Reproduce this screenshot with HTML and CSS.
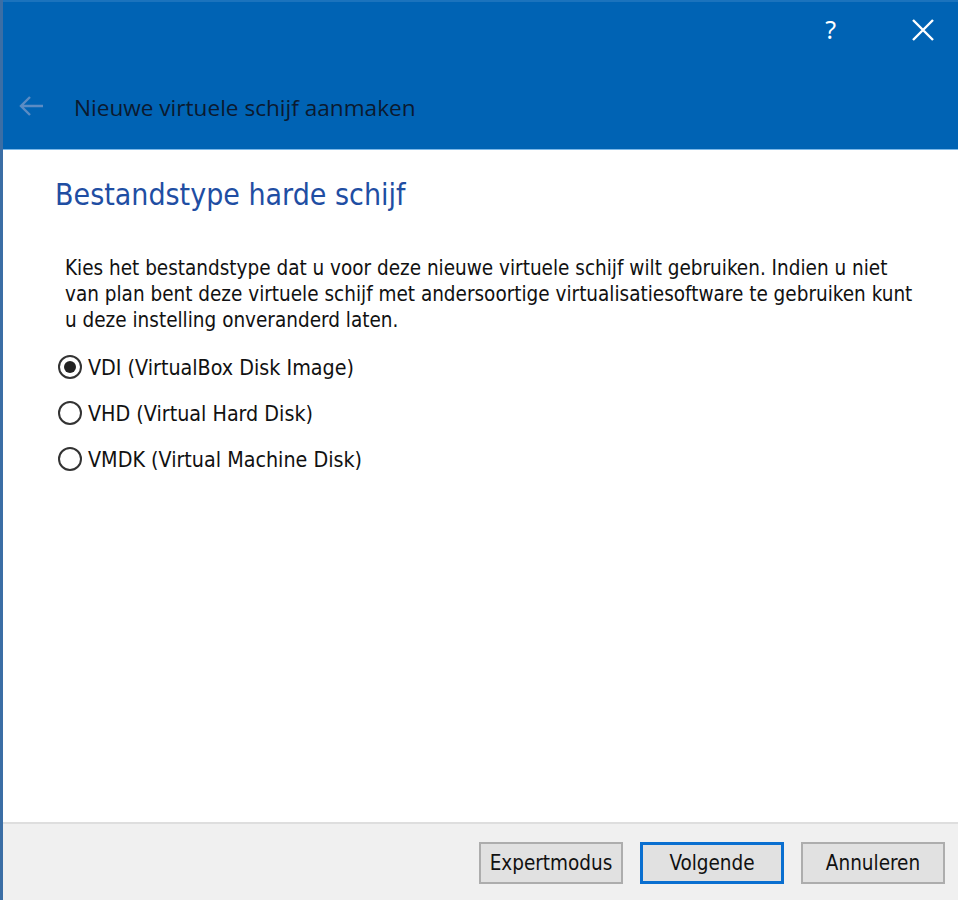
FILE: index.html
```html
<!DOCTYPE html>
<html lang="nl">
<head>
    <meta charset="UTF-8">
    <title>Nieuwe virtuele schijf aanmaken</title>
    <link rel="stylesheet" href="styles.css">
</head>
<body>
    <div class="window">
        <!-- Header -->
        <div class="header">
            <div class="caption-bar">
                <span class="help">?</span>
                <svg class="close" width="26" height="26" viewBox="0 0 26 26">
                    <path d="M3 3 L23 23 M23 3 L3 23" stroke="#fff" stroke-width="2.4" fill="none"/>
                </svg>
            </div>
            <div class="title-row">
                <svg class="back" width="28" height="22" viewBox="0 0 28 22">
                    <path d="M26 11 H4 M13 2 L4 11 L13 20" stroke="#5b8cc4" stroke-width="2.4" fill="none"/>
                </svg>
                <span class="title">Nieuwe virtuele schijf aanmaken</span>
            </div>
        </div>

        <!-- Page -->
        <div class="content">
            <h1 class="page-title">Bestandstype harde schijf</h1>
            <p class="description">
                Kies het bestandstype dat u voor deze nieuwe virtuele schijf wilt gebruiken. Indien u niet<br>
                van plan bent deze virtuele schijf met andersoortige virtualisatiesoftware te gebruiken kunt<br>
                u deze instelling onveranderd laten.
            </p>
            <div class="options">
                <label class="option"><span class="radio checked"></span>VDI (VirtualBox Disk Image)</label>
                <label class="option"><span class="radio"></span>VHD (Virtual Hard Disk)</label>
                <label class="option"><span class="radio"></span>VMDK (Virtual Machine Disk)</label>
            </div>
        </div>

        <!-- Buttons -->
        <div class="footer">
            <button class="btn">Expertmodus</button>
            <button class="btn default">Volgende</button>
            <button class="btn">Annuleren</button>
        </div>
    </div>
</body>
</html>
```

FILE: styles.css
```css
body {
    margin: 0;
    padding: 0;
    background-color: #fff;
    overflow: hidden;
}
.window {
    display: flex;
    flex-direction: column;
    height: 900px;
    width: 955px;
    border-left: 3px solid #3b6ea5;
}
.header {
    background-color: #0063b4;
    border-top: 2px solid #1b73bd;
    border-bottom: 1px solid #7cb8e8;
    box-sizing: border-box;
    height: 150px;
}
.caption-bar {
    display: flex;
    justify-content: flex-end;
    align-items: center;
    height: 58px;
    gap: 74px;
    padding-right: 22px;
}
.help {
    color: #fff;
    font-family: "Noto Sans", sans-serif;
    font-size: 25px;
    margin-top: -4px;
}
.close {
    margin-top: -2px;
}
.title-row {
    display: flex;
    align-items: center;
    height: 50px;
    margin-top: 21px;
    padding-left: 14px;
    gap: 29px;
}
.title {
    color: #0b1a30;
    font-family: "Open Sans", sans-serif;
    font-size: 22.6px;
    margin-top: 2px;
}
.content {
    flex: 1;
    padding: 0 0 0 52px;
}
.page-title {
    margin: 28px 0 0 0;
    font-family: "DejaVu Sans Condensed", "DejaVu Sans", sans-serif;
    font-weight: normal;
    font-size: 30px;
    color: #1f4ea3;
    line-height: 34px;
}
.description {
    margin: 43px 0 0 10px;
    font-family: "DejaVu Sans Condensed", "DejaVu Sans", sans-serif;
    font-size: 20.5px;
    line-height: 26px;
    color: #111;
    white-space: nowrap;
}
.options {
    display: flex;
    flex-direction: column;
    gap: 20px;
    margin-top: 21px;
    margin-left: 3px;
}
.option {
    display: flex;
    align-items: center;
    gap: 6px;
    height: 26px;
    font-family: "DejaVu Sans Condensed", "DejaVu Sans", sans-serif;
    font-size: 21.3px;
    color: #111;
}
.radio {
    width: 20px;
    height: 20px;
    border: 2px solid #333;
    border-radius: 50%;
    background: #fff;
    box-sizing: content-box;
    display: flex;
    align-items: center;
    justify-content: center;
}
.radio.checked::after {
    content: "";
    width: 12px;
    height: 12px;
    border-radius: 50%;
    background: #222;
}
.footer {
    height: 74px;
    background-color: #f0f0f0;
    border-top: 2px solid #dedede;
    display: flex;
    justify-content: flex-end;
    align-items: center;
    gap: 17px;
    padding-right: 13px;
    padding-top: 2px;
}
.btn {
    width: 144px;
    height: 42px;
    background-color: #e1e1e1;
    border: 2px solid #adadad;
    font-family: "DejaVu Sans Condensed", "DejaVu Sans", sans-serif;
    font-size: 20.5px;
    color: #111;
    padding: 0;
}
.btn.default {
    border: 3px solid #0a6fd0;
}
```
